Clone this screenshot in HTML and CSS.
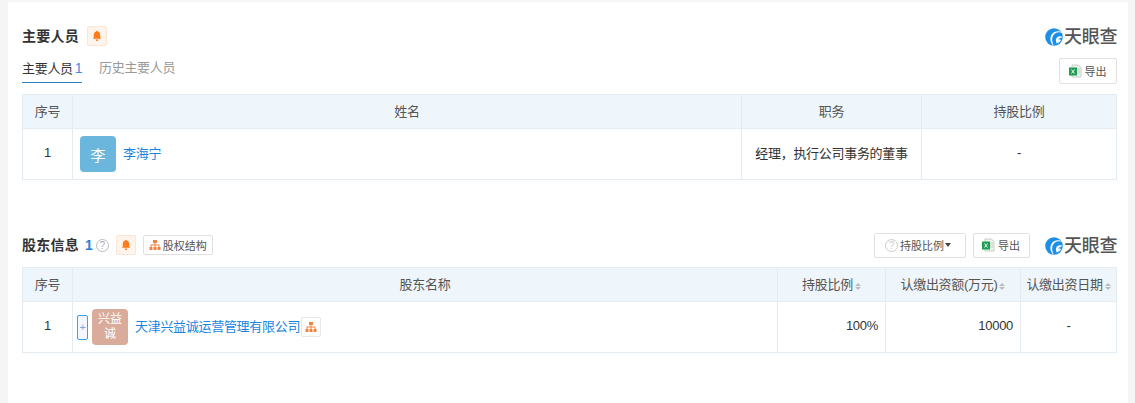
FILE: index.html
```html
<!DOCTYPE html>
<html lang="zh-CN">
<head>
  <meta charset="UTF-8">
  <title>主要人员</title>
  <link rel="stylesheet" href="styles.css">
</head>
<body>
  <svg class="defs" width="0" height="0">
    <symbol id="bell" viewBox="0 0 12 12">
      <path d="M6 .8c.5 0 .8.3.8.7C8.400 1.900 9.200 3.200 9.200 5v2.400l1 1.400H1.800l1-1.400V5c0-1.800.8-3.100 2.400-3.500 0-.4.3-.7.8-.7z" fill="#ff7a1a"/>
      <path d="M4.700 9.500h2.600C7.200 10.400 6.700 11 6 11s-1.200-.6-1.300-1.500z" fill="#ff7a1a"/>
    </symbol>
    <symbol id="tree" viewBox="0 0 12 12">
      <path d="M4 1h4v3H4zM.5 8h3v3h-3zM4.500 8h3v3h-3zM8.500 8h3v3h-3z" fill="#f0823f"/>
      <path d="M5.500 4h1v1.500h4V8h-1V6.500h-3V8h-1V6.500h-3V8h-1V5.500h4z" fill="#f0823f"/>
    </symbol>
    <symbol id="excel" viewBox="0 0 14 14">
      <path d="M4 1h6.500L13 3.500V13H4z" fill="#eef3ee" stroke="#b9c4bd" stroke-width=".8"/>
      <path d="M9 5h3M9 7h3M9 9h3" stroke="#b9c4bd" stroke-width=".8"/>
      <rect x="1" y="3.500" width="8" height="8" fill="#1f9d55"/>
      <path d="M3.500 5.500l3 4M6.500 5.500l-3 4" stroke="#fff" stroke-width=".9"/>
    </symbol>
    <symbol id="swirl" viewBox="0 0 18 18">
      <circle cx="9" cy="9" r="8.800" fill="#1c8fe6"/>
      <path d="M18 5.200C13.800 2.800 8.600 4.600 7.400 9.300 6.800 12 7.300 14.800 8.800 18 5 14.800 4.500 9.800 6.800 6.300 9.200 2.800 14.400 2.200 18 5.200z" fill="#fff"/>
      <path d="M18 9c-3-1.600-6.300-.7-7 2.200-.2 1.300 0 2.700.8 4.400 1.400-.6 3.600-2.300 4.300-3.700-1.100-.5-2.100-.6-3-.3 1-1.400 2.900-2 4.900-2.600z" fill="#fff"/>
    </symbol>
  </svg>

  <main class="card">
    <!-- 主要人员 -->
    <section class="block block-staff">
      <div class="title-row">
        <h2>主要人员</h2>
        <span class="bell-box"><svg class="bell"><use href="#bell"/></svg></span>
        <span class="logo logo-push"><svg class="swirl"><use href="#swirl"/></svg><b>天眼查</b></span>
      </div>
      <div class="tab-row">
        <div class="tabs">
          <span class="tab active">主要人员<em>1</em></span>
          <span class="tab">历史主要人员</span>
        </div>
        <button class="btn btn-export"><svg class="excel"><use href="#excel"/></svg>导出</button>
      </div>
      <table>
        <thead>
          <tr>
            <th class="c-no">序号</th>
            <th>姓名</th>
            <th class="c-job">职务</th>
            <th class="c-share">持股比例</th>
          </tr>
        </thead>
        <tbody>
          <tr>
            <td class="center">1</td>
            <td class="person-cell">
              <div class="person">
                <span class="avatar blue">李</span>
                <a href="#">李海宁</a>
              </div>
            </td>
            <td class="center">经理，执行公司事务的董事</td>
            <td class="center">-</td>
          </tr>
        </tbody>
      </table>
    </section>

    <!-- 股东信息 -->
    <section class="block block-holders">
      <div class="title-row holders-row">
        <h2>股东信息</h2>
        <strong class="count">1</strong>
        <span class="help">?</span>
        <span class="bell-box"><svg class="bell"><use href="#bell"/></svg></span>
        <button class="btn btn-tree"><svg class="tree"><use href="#tree"/></svg>股权结构</button>
        <button class="btn btn-filter logo-push"><span class="help light">?</span>持股比例<i class="caret"></i></button>
        <button class="btn btn-export"><svg class="excel"><use href="#excel"/></svg>导出</button>
        <span class="logo"><svg class="swirl"><use href="#swirl"/></svg><b>天眼查</b></span>
      </div>
      <table>
        <thead>
          <tr>
            <th class="c-no">序号</th>
            <th>股东名称</th>
            <th class="c-ratio">持股比例<i class="sort"></i></th>
            <th class="c-money">认缴出资额(万元)<i class="sort"></i></th>
            <th class="c-date">认缴出资日期<i class="sort"></i></th>
          </tr>
        </thead>
        <tbody>
          <tr>
            <td class="center">1</td>
            <td class="person-cell holder-cell">
              <div class="person">
                <span class="expand">+</span>
                <span class="avatar tan">兴益诚</span>
                <a href="#">天津兴益诚运营管理有限公司</a>
                <span class="tree-box"><svg class="tree"><use href="#tree"/></svg></span>
              </div>
            </td>
            <td class="right">100%</td>
            <td class="right">10000</td>
            <td class="center">-</td>
          </tr>
        </tbody>
      </table>
    </section>
  </main>
</body>
</html>
```

FILE: styles.css
```css
* {
  box-sizing: border-box;
  margin: 0;
  padding: 0;
}

body {
  background-color: #f5f5f5;
  color: #333;
  font-family: "Liberation Sans", "Noto Sans CJK SC", sans-serif;
  font-size: 13px;
  height: 403px;
  overflow: hidden;
  padding: 2px 7px 0 8px;
}

.defs {
  display: block;
  height: 0;
}

.card {
  background-color: #fff;
  height: 401px;
  padding: 24px 11px 0 14px;
}

.title-row {
  align-items: center;
  display: flex;
  height: 20px;
}

h2 {
  color: #333;
  font-size: 14px;
  font-weight: 700;
  letter-spacing: .25px;
  line-height: 20px;
}

.bell-box {
  align-items: center;
  background-color: #fff4ec;
  border: 1px solid #fbe6d6;
  border-radius: 2px;
  display: flex;
  height: 20px;
  justify-content: center;
  margin-left: 8px;
  width: 20px;
}

.holders-row .bell-box {
  margin-left: 7px;
}

.bell {
  height: 12px;
  width: 12px;
}

.logo {
  align-items: center;
  color: #555;
  display: flex;
  flex: none;
  height: 20px;
  padding-top: 2px;
  white-space: nowrap;
  width: 72px;
}

.logo b {
  font-size: 18px;
  font-weight: 500;
  letter-spacing: -.3px;
  line-height: 20px;
}

.swirl {
  flex: none;
  height: 18px;
  margin-right: 1px;
  width: 18px;
}

.logo-push {
  margin-left: auto;
}

.tab-row {
  align-items: flex-start;
  display: flex;
  height: 48px;
  justify-content: space-between;
  padding-top: 12px;
}

.tabs {
  display: flex;
  gap: 17px;
  letter-spacing: -.3px;
}

.tab {
  color: #999;
  display: block;
  height: 25px;
  line-height: 20px;
  white-space: nowrap;
}

.tab.active {
  border-bottom: 1px solid #2a7fbd;
  color: #333;
  width: 60px;
}

.tab em {
  color: #3f8ee0;
  font-size: 14px;
  font-style: normal;
  margin-left: 2px;
}

.btn {
  align-items: center;
  background-color: #fff;
  border: 1px solid #e0e0e0;
  border-radius: 2px;
  color: #555;
  display: flex;
  flex: none;
  font-family: inherit;
  font-size: 11px;
  justify-content: center;
  white-space: nowrap;
}

.btn-export {
  height: 26px;
  padding-right: 2px;
  width: 58px;
}

.excel {
  height: 14px;
  margin-right: 3px;
  width: 14px;
}

table {
  border-collapse: collapse;
  letter-spacing: -.3px;
  table-layout: fixed;
  width: 1095px;
}

th, td {
  border: 1px solid #e5ecf1;
  font-size: 13px;
  overflow: hidden;
  padding-bottom: 3px;
  white-space: nowrap;
}

th {
  background-color: #eef5fb;
  color: #555;
  font-weight: 400;
  height: 34px;
}

td {
  color: #333;
  height: 51px;
}

td.person-cell {
  padding-bottom: 0;
}

.c-no { width: 50px; }
.c-job { width: 180px; }
.c-share { width: 195px; }
.c-ratio { width: 108px; }
.c-money { width: 135px; }
.c-date { width: 96px; }

.center { text-align: center; }
.right { padding-right: 7px; text-align: right; }

.person {
  align-items: center;
  display: flex;
  padding-left: 7px;
}

.holder-cell .person {
  padding-left: 4px;
}

.avatar {
  align-items: center;
  border-radius: 4px;
  color: #fff;
  display: flex;
  flex: none;
  font-size: 15px;
  height: 36px;
  justify-content: center;
  letter-spacing: 0;
  margin-right: 7px;
  text-align: center;
  width: 36px;
}

.avatar.blue { background-color: #6bb6dc; }

.avatar.tan {
  background-color: #d9ab9a;
  font-size: 12px;
  line-height: 15px;
  padding: 0 5px;
  white-space: normal;
}

a {
  color: #1a85e0;
  padding-bottom: 3px;
  text-decoration: none;
}

.expand {
  align-items: center;
  background-color: #f2f8fe;
  border: 1px solid #3f9fe6;
  border-radius: 2px;
  color: #7aa8d6;
  display: flex;
  font-size: 11px;
  height: 25px;
  justify-content: center;
  margin-right: 4px;
  width: 11px;
}

.tree-box {
  align-items: center;
  border: 1px solid #e8e8e8;
  border-radius: 2px;
  display: flex;
  height: 20px;
  justify-content: center;
  margin-left: 1px;
  width: 20px;
}

.tree {
  flex: none;
  height: 12px;
  width: 12px;
}

.block-holders {
  margin-top: 53px;
}

.holders-row {
  height: 24px;
  margin-bottom: 10px;
}

.count {
  color: #2a7fd5;
  font-size: 14px;
  margin-left: 6px;
}

.help {
  border: 1px solid #bbb;
  border-radius: 50%;
  color: #aaa;
  display: block;
  flex: none;
  font-size: 10px;
  height: 13px;
  line-height: 11px;
  margin-left: 3px;
  text-align: center;
  width: 13px;
}

.help.light {
  border-color: #ccc;
  color: #ccc;
  margin: 0 2px 0 0;
}

.btn-tree {
  height: 20px;
  margin-left: 7px;
  width: 70px;
}

.btn-tree .tree {
  margin-right: 2px;
}

.btn-filter {
  height: 25px;
  margin-right: 7px;
  padding-right: 4px;
  width: 92px;
}

.holders-row .btn-export {
  height: 25px;
  margin-right: 15px;
  width: 57px;
}

.caret {
  border-left: 3px solid transparent;
  border-right: 3px solid transparent;
  border-top: 4px solid #444;
  margin-left: 1px;
}

.sort {
  border-left: 3px solid transparent;
  border-right: 3px solid transparent;
  border-top: 3px solid #bbb;
  display: inline-block;
  margin-left: 2px;
  position: relative;
  top: 3px;
  vertical-align: middle;
}

.sort::before {
  border-bottom: 3px solid #bbb;
  border-left: 3px solid transparent;
  border-right: 3px solid transparent;
  content: "";
  left: -3px;
  position: absolute;
  top: -7px;
}
```
